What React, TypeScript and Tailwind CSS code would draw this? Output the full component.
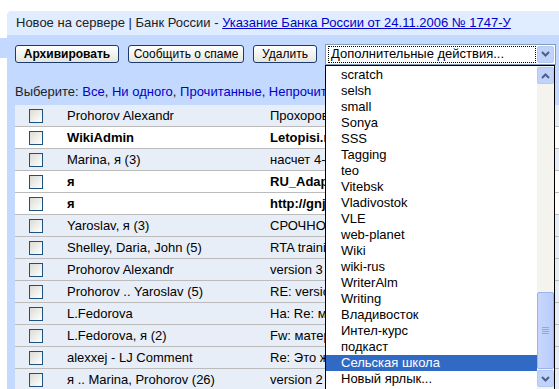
import React from 'react'

const rows = [
  { from: 'Prohorov Alexandr', subj: 'Прохоров Александр приглашает вас', unread: false },
  { from: 'WikiAdmin', subj: 'Letopisi.ru новости проекта', unread: true },
  { from: 'Marina, я (3)', subj: 'насчет 4-го числа', unread: false },
  { from: 'я', subj: 'RU_Adaptation', unread: true },
  { from: 'я', subj: 'http://gnj.ru', unread: true },
  { from: 'Yaroslav, я (3)', subj: 'СРОЧНО: отчет', unread: false },
  { from: 'Shelley, Daria, John (5)', subj: 'RTA training', unread: false },
  { from: 'Prohorov Alexandr', subj: 'version 3', unread: false },
  { from: 'Prohorov .. Yaroslav (5)', subj: 'RE: version 3', unread: false },
  { from: 'L.Fedorova', subj: 'На: Re: материалы', unread: false },
  { from: 'L.Fedorova, я (2)', subj: 'Fw: материалы', unread: false },
  { from: 'alexxej - LJ Comment', subj: 'Re: Это же', unread: false },
  { from: 'я .. Marina, Prohorov (26)', subj: 'version 2', unread: false },
]

const labels = [
  'scratch', 'selsh', 'small', 'Sonya', 'SSS', 'Tagging', 'teo', 'Vitebsk', 'Vladivostok', 'VLE',
  'web-planet', 'Wiki', 'wiki-rus', 'WriterAlm', 'Writing', 'Владивосток', 'Интел-курс', 'подкаст',
  'Сельская школа', 'Новый ярлык...',
]

function Btn({ children, bold, w }: { children: React.ReactNode; bold?: boolean; w: string }) {
  return (
    <div
      className={`${w} h-[18px] flex items-center justify-center rounded-[3px] border border-[#1c3a6e] bg-gradient-to-b from-white to-[#e6e6e0] text-[12px] leading-none text-black ${bold ? 'font-bold' : ''}`}
    >
      {children}
    </div>
  )
}

function Chevron({ up }: { up?: boolean }) {
  return (
    <svg width="9" height="6" viewBox="0 0 9 6">
      <path d={up ? 'M1 5 L4.5 1.5 L8 5' : 'M1 1 L4.5 4.5 L8 1'} fill="none" stroke="#4d6185" strokeWidth="2" />
    </svg>
  )
}

export default function App() {
  return (
    <div className="w-[559px] h-[389px] bg-white relative overflow-hidden text-[13px] text-black" style={{ fontFamily: '"Liberation Sans", Arial, sans-serif' }}>
      {/* ── nav tab joint ── */}
      <div className="absolute left-0 top-[38px] w-[8px] h-[20px] bg-[#c3d9ff]" />

      <div className="pt-[11px] pl-[7px]">
        <div className="bg-[#c3d9ff] rounded-tl-[5px] h-[378px]">
          {/* ── Header ── */}
          <div className="h-[24px] bg-[#e0ecff] rounded-tl-[5px] flex items-center pl-[9px] whitespace-nowrap text-[#222]">
            Новое на сервере | Банк России -&nbsp;
            <span className="text-[#0000cc] underline">Указание Банка России от 24.11.2006 № 1747-У</span>
          </div>

          {/* ── Toolbar ── */}
          <div className="pt-[9px] pl-[8px] flex items-center h-[29px]">
            <Btn bold w="w-[104px]">Архивировать</Btn>
            <div className="w-[9px]" />
            <Btn w="w-[116px]">Сообщить о спаме</Btn>
            <div className="w-[9px]" />
            <Btn w="w-[64px]">Удалить</Btn>
            <div className="w-[8px]" />
            <div className="w-[231px] h-[21px] bg-white border border-[#7f9db9] flex items-center pl-[2px] pr-[1px]">
              <div className="flex-1 h-[17px] border border-dotted border-black flex items-center pl-[2px] text-[13px] whitespace-nowrap">
                Дополнительные действия...
              </div>
              <div className="w-[17px] h-[17px] ml-[1px] rounded-[2px] bg-[#c1d3fb] border border-[#b6c8f0] flex items-center justify-center">
                <Chevron />
              </div>
            </div>
          </div>

          {/* ── Select links ── */}
          <div className="mt-[20px] ml-[8px] w-[310px] overflow-hidden h-[16px] leading-[16px] whitespace-nowrap text-[#222] text-[13px]">
            Выберите: <span className="text-[#0000cc]">Все</span>, <span className="text-[#0000cc]">Ни одного</span>,{' '}
            <span className="text-[#0000cc]">Прочитанные</span>, <span className="text-[#0000cc]">Непрочитанные</span>
          </div>

          {/* ── Message list ── */}
          <div className="mt-[5px] ml-[8px]">
            {rows.map((r, i) => (
              <div
                key={i}
                className={`h-[22px] flex items-center border-b border-[#bbbbbb] whitespace-nowrap ${r.unread ? 'bg-white font-bold' : 'bg-[#e8eef7]'}`}
              >
                <div className="w-[14px] h-[14px] ml-[14px] border border-[#1c5180] bg-gradient-to-br from-[#dcdcd4] to-white" />
                <div className="w-[227px] pl-[24px] overflow-hidden">{r.from}</div>
                <div className="w-[55px] overflow-hidden">{r.subj}</div>
              </div>
            ))}
          </div>
        </div>
      </div>

      {/* ── Dropdown menu ── */}
      <div className="absolute left-[325px] top-[65px] w-[230px] h-[330px] bg-white border border-black flex">
        <div className="flex-1 pt-[1px]">
          {labels.map((l, i) => (
            <div
              key={l}
              className={`h-[16px] leading-[16px] pl-[15px] text-[13px] whitespace-nowrap ${i === 18 ? 'bg-[#316ac5] text-white' : 'text-black'}`}
            >
              {l}
            </div>
          ))}
        </div>
        <div className="w-[17px] bg-[#f4f3ee] flex flex-col pt-[1px]">
          <div className="w-[17px] h-[17px] rounded-[2px] bg-[#c1d3fb] border border-[#b6c8f0] flex items-center justify-center">
            <Chevron up />
          </div>
          <div className="h-[208px]" />
          <div className="w-[17px] h-[77px] rounded-[2px] bg-gradient-to-r from-[#c7d6fc] to-[#b9cdfb] border border-[#9bb3ec] flex items-center justify-center">
            <div className="flex flex-col gap-[1px]">
              <div className="w-[7px] h-[1px] bg-[#8ca6e6]" />
              <div className="w-[7px] h-[1px] bg-[#8ca6e6]" />
              <div className="w-[7px] h-[1px] bg-[#8ca6e6]" />
              <div className="w-[7px] h-[1px] bg-[#8ca6e6]" />
            </div>
          </div>
          <div className="w-[17px] h-[17px] mt-[1px] rounded-[2px] bg-[#c1d3fb] border border-[#b6c8f0] flex items-center justify-center">
            <Chevron />
          </div>
        </div>
      </div>
    </div>
  )
}
